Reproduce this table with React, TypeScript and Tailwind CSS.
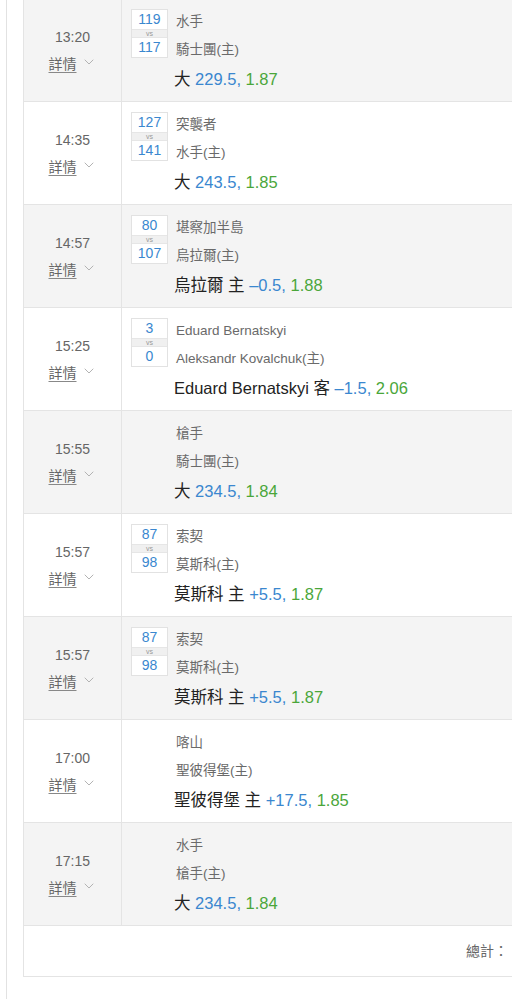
import { ChevronDown } from "lucide-react";

type Match = {
  time: string;
  score?: [string, string];
  away: string;
  home: string;
  pick: string;
  line: string;
  odds: string;
};

const matches: Match[] = [
  { time: "13:20", score: ["119", "117"], away: "水手", home: "騎士團(主)", pick: "大", line: "229.5", odds: "1.87" },
  { time: "14:35", score: ["127", "141"], away: "突襲者", home: "水手(主)", pick: "大", line: "243.5", odds: "1.85" },
  { time: "14:57", score: ["80", "107"], away: "堪察加半島", home: "烏拉爾(主)", pick: "烏拉爾 主", line: "–0.5", odds: "1.88" },
  { time: "15:25", score: ["3", "0"], away: "Eduard Bernatskyi", home: "Aleksandr Kovalchuk(主)", pick: "Eduard Bernatskyi 客", line: "–1.5", odds: "2.06" },
  { time: "15:55", away: "槍手", home: "騎士團(主)", pick: "大", line: "234.5", odds: "1.84" },
  { time: "15:57", score: ["87", "98"], away: "索契", home: "莫斯科(主)", pick: "莫斯科 主", line: "+5.5", odds: "1.87" },
  { time: "15:57", score: ["87", "98"], away: "索契", home: "莫斯科(主)", pick: "莫斯科 主", line: "+5.5", odds: "1.87" },
  { time: "17:00", away: "喀山", home: "聖彼得堡(主)", pick: "聖彼得堡 主", line: "+17.5", odds: "1.85" },
  { time: "17:15", away: "水手", home: "槍手(主)", pick: "大", line: "234.5", odds: "1.84" },
];

function ScoreBox({ score }: { score: [string, string] }) {
  return (
    <div className="w-[37px] border border-[#e2e2e2] bg-white text-center text-[14px] leading-[19px] text-[#3a87cf]">
      <div>{score[0]}</div>
      <div className="h-[9px] bg-[#f0f0f0] text-[7px] leading-[8px] text-[#999] border-y border-[#e6e6e6]">vs</div>
      <div>{score[1]}</div>
    </div>
  );
}

function Row({ m, shaded }: { m: Match; shaded: boolean }) {
  return (
    <div className={`flex h-[103px] border-b border-[#e4e4e4] ${shaded ? "bg-[#f4f4f4]" : "bg-white"}`}>
      <div className="w-[98px] shrink-0 border-r border-[#e4e4e4] flex flex-col items-center pt-[28px]">
        <div className="text-[14px] leading-[20px] text-[#666]">{m.time}</div>
        <div className="mt-[7px] flex items-center text-[14px] leading-[20px] text-[#666]">
          <span className="underline underline-offset-[3px] decoration-[#888]">詳情</span>
          <ChevronDown className="ml-[4px] -mt-[5px] text-[#b3b3b3]" size={16} strokeWidth={1.5} />
        </div>
      </div>
      <div className="flex-1 pl-[9px] pt-[10px] grid grid-cols-[37px_1fr] gap-x-[8px]">
        <div>{m.score && <ScoreBox score={m.score} />}</div>
        <div className="text-[13.5px] text-[#6a6a6a] leading-[28px] -mt-[1px]">
          <div>{m.away}</div>
          <div>{m.home}</div>
          <div className="mt-[3px] -ml-[2px] text-[16.5px] leading-[24px] text-[#222]">
            {m.pick} <span className="text-[#3a87cf]">{m.line},</span>{" "}
            <span className="text-[#4aa63a]">{m.odds}</span>
          </div>
        </div>
      </div>
    </div>
  );
}

export default function App() {
  return (
    <div className="w-[512px] h-[1000px] overflow-hidden bg-white font-['Liberation_Sans','Noto_Sans_CJK_TC',sans-serif]">
      <div className="ml-[6px] h-full border-l border-[#e2e2e2] pl-[16px]">
        <div className="-mt-[1px] w-[580px] border-x border-b border-[#e4e4e4]">
          {matches.map((m, i) => (
            <Row key={i} m={m} shaded={i % 2 === 0} />
          ))}
          <div className="h-[50px] flex items-center justify-end pr-[94px] text-[14px] text-[#666]">
            總計：
          </div>
        </div>
      </div>
    </div>
  );
}
